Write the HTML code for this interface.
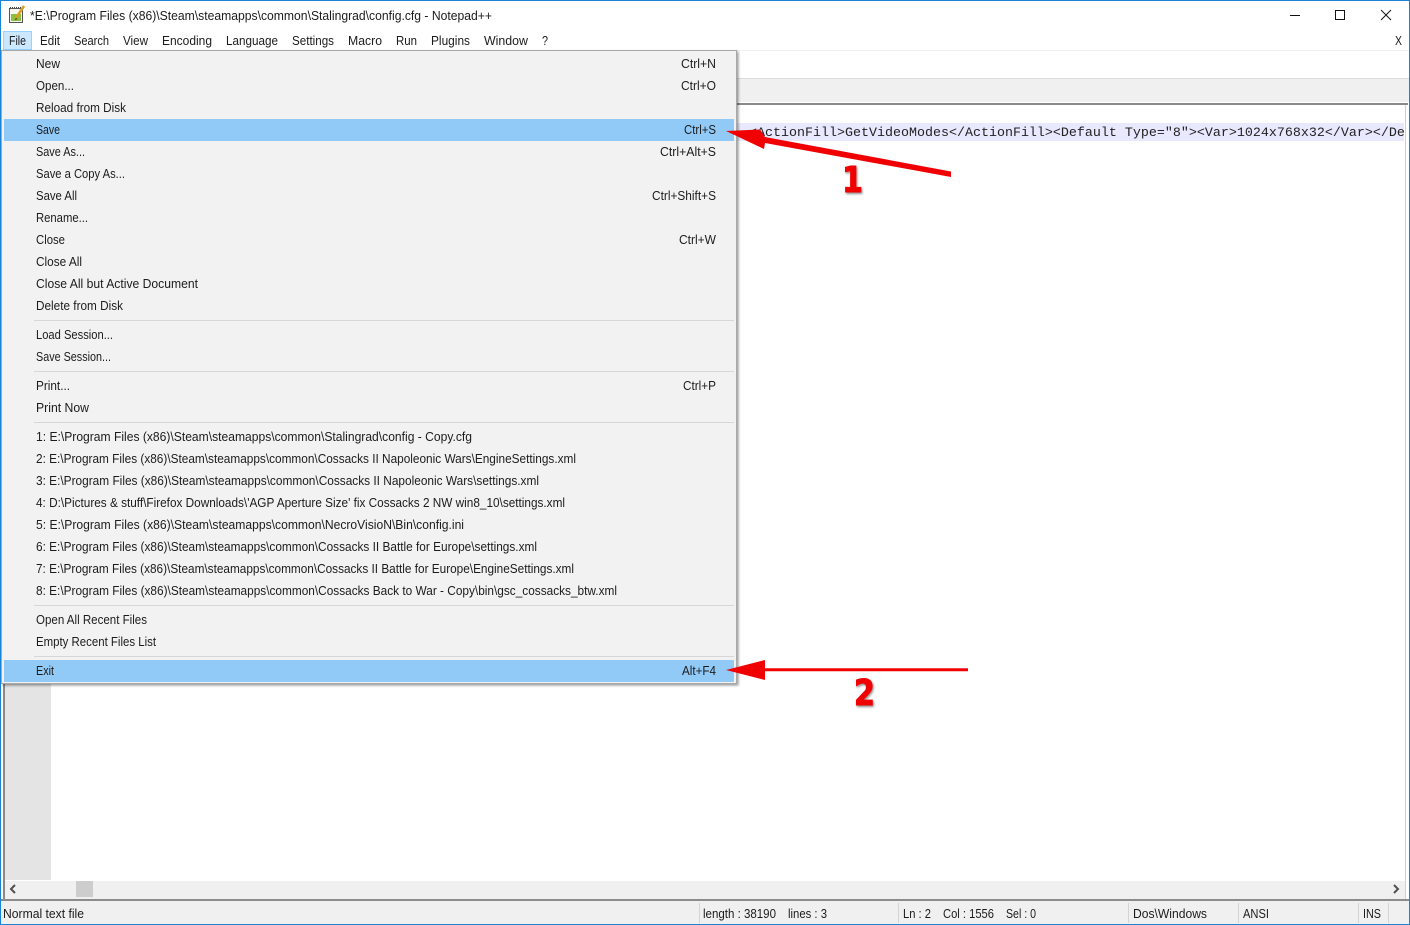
<!DOCTYPE html>
<html><head><meta charset="utf-8"><style>
html,body{margin:0;padding:0;background:#fff;width:1410px;height:925px;overflow:hidden}
svg{display:block}
text{font-family:"Liberation Sans",sans-serif;font-size:12.5px;fill:#1c1c1c}
.m{font-family:"Liberation Mono",monospace;font-size:13.33px;fill:#222}
</style></head><body>
<svg width="1410" height="925" viewBox="0 0 1410 925" xmlns="http://www.w3.org/2000/svg">
<defs>
<filter id="sh" x="-5%" y="-5%" width="110%" height="110%"><feDropShadow dx="1.5" dy="1.5" stdDeviation="1.2" flood-color="#000" flood-opacity=".4"/></filter>
<filter id="ns" x="-30%" y="-30%" width="160%" height="160%"><feDropShadow dx="1" dy="1.5" stdDeviation="1" flood-color="#000" flood-opacity=".45"/></filter>
<clipPath id="cl"><rect x="52" y="105" width="1352" height="775"/></clipPath>
</defs>
<rect width="1410" height="925" fill="#fff"/>
<!-- toolbars -->
<rect x="1" y="50" width="1408" height="1" fill="#f0f0f0"/>
<rect x="1" y="78" width="1408" height="1" fill="#dcdcdc"/>
<rect x="1" y="79" width="1408" height="23" fill="#f0f0f0"/>
<!-- editor -->
<rect x="3" y="103" width="1405" height="2" fill="#8a8a8a"/>
<rect x="3" y="103" width="2" height="797" fill="#8a8a8a"/>
<rect x="1405" y="105" width="1" height="795" fill="#d0d0d0"/>
<rect x="5" y="105" width="46" height="775" fill="#e4e4e4"/>
<rect x="52" y="123" width="1352" height="18" fill="#e8e8ff"/>
<text class="m" x="749" y="136" clip-path="url(#cl)">&lt;ActionFill&gt;GetVideoModes&lt;/ActionFill&gt;&lt;Default Type="8"&gt;&lt;Var&gt;1024x768x32&lt;/Var&gt;&lt;/De</text>
<!-- scrollbar -->
<rect x="5" y="881" width="1400" height="18" fill="#f0f0f0"/>
<rect x="76" y="881" width="17" height="16" fill="#cdcdcd"/>
<path d="M15 885l-4 4 4 4M1394 885l4 4-4 4" fill="none" stroke="#505050" stroke-width="2"/>
<!-- status -->
<rect x="1" y="899" width="1408" height="2" fill="#8c8c8c"/>
<rect x="1" y="901" width="1408" height="23" fill="#f0f0f0"/>
<path d="M699.500 903v20M898.500 903v20M1128.500 903v20M1238.500 903v20M1358.500 903v20M1388.500 903v20" stroke="#d4d4d4"/>
<text x="3" y="918" textLength="81" lengthAdjust="spacingAndGlyphs">Normal text file</text>
<text x="703" y="918" textLength="73" lengthAdjust="spacingAndGlyphs">length : 38190</text>
<text x="788" y="918" textLength="39" lengthAdjust="spacingAndGlyphs">lines : 3</text>
<text x="903" y="918" textLength="28" lengthAdjust="spacingAndGlyphs">Ln : 2</text>
<text x="943" y="918" textLength="51" lengthAdjust="spacingAndGlyphs">Col : 1556</text>
<text x="1006" y="918" textLength="30" lengthAdjust="spacingAndGlyphs">Sel : 0</text>
<text x="1133" y="918" textLength="74" lengthAdjust="spacingAndGlyphs">Dos\Windows</text>
<text x="1243" y="918" textLength="26" lengthAdjust="spacingAndGlyphs">ANSI</text>
<text x="1363" y="918" textLength="18" lengthAdjust="spacingAndGlyphs">INS</text>
<!-- title bar -->
<path d="M9.500 8.500h13v14h-13z" fill="#f6f6f0" stroke="#555"/>
<path d="M10 7.500h12" stroke="#444" stroke-dasharray="1 1"/>
<rect x="11" y="14" width="10" height="7" fill="#8fbf3f"/>
<path d="M16 18l8-12" stroke="#d8a020" stroke-width="2.500"/>
<path d="M14.500 20l1.500-2 1.500 1z" fill="#333"/>
<text x="30" y="20" textLength="462" lengthAdjust="spacingAndGlyphs">*E:\Program Files (x86)\Steam\steamapps\common\Stalingrad\config.cfg - Notepad++</text>
<path d="M1290 15.500h10" stroke="#111"/>
<rect x="1335.500" y="10.500" width="9" height="9" fill="none" stroke="#111"/>
<path d="M1381 10l10 10M1391 10l-10 10" stroke="#111"/>
<!-- menu bar -->
<rect x="3.500" y="31.500" width="28" height="18" fill="#cce8ff" stroke="#99d1ff"/>
<text x="9" y="45" textLength="17" lengthAdjust="spacingAndGlyphs">File</text>
<text x="40" y="45" textLength="20" lengthAdjust="spacingAndGlyphs">Edit</text>
<text x="74" y="45" textLength="35" lengthAdjust="spacingAndGlyphs">Search</text>
<text x="123" y="45" textLength="25" lengthAdjust="spacingAndGlyphs">View</text>
<text x="162" y="45" textLength="50" lengthAdjust="spacingAndGlyphs">Encoding</text>
<text x="226" y="45" textLength="52" lengthAdjust="spacingAndGlyphs">Language</text>
<text x="292" y="45" textLength="42" lengthAdjust="spacingAndGlyphs">Settings</text>
<text x="348" y="45" textLength="34" lengthAdjust="spacingAndGlyphs">Macro</text>
<text x="396" y="45" textLength="21" lengthAdjust="spacingAndGlyphs">Run</text>
<text x="431" y="45" textLength="39" lengthAdjust="spacingAndGlyphs">Plugins</text>
<text x="484" y="45" textLength="44" lengthAdjust="spacingAndGlyphs">Window</text>
<text x="542" y="45" textLength="6" lengthAdjust="spacingAndGlyphs">?</text>
<text x="1395" y="45" textLength="7" lengthAdjust="spacingAndGlyphs">X</text>
<!-- dropdown -->
<rect x="1.500" y="50.500" width="735" height="633" fill="#f2f2f2" stroke="#a8a8a8" filter="url(#sh)"/>
<rect x="4" y="119" width="730" height="22" fill="#91c9f7"/>
<rect x="4" y="660" width="730" height="22" fill="#91c9f7"/>
<path d="M34 320.500h700M34 371.500h700M34 422.500h700M34 605.500h700M34 656.500h700" stroke="#d7d7d7"/>
<text x="36" y="68" textLength="24" lengthAdjust="spacingAndGlyphs">New</text>
<text x="36" y="90" textLength="38" lengthAdjust="spacingAndGlyphs">Open...</text>
<text x="36" y="112" textLength="90" lengthAdjust="spacingAndGlyphs">Reload from Disk</text>
<text x="36" y="134" textLength="24" lengthAdjust="spacingAndGlyphs">Save</text>
<text x="36" y="156" textLength="49" lengthAdjust="spacingAndGlyphs">Save As...</text>
<text x="36" y="178" textLength="89" lengthAdjust="spacingAndGlyphs">Save a Copy As...</text>
<text x="36" y="200" textLength="41" lengthAdjust="spacingAndGlyphs">Save All</text>
<text x="36" y="222" textLength="52" lengthAdjust="spacingAndGlyphs">Rename...</text>
<text x="36" y="244" textLength="29" lengthAdjust="spacingAndGlyphs">Close</text>
<text x="36" y="266" textLength="46" lengthAdjust="spacingAndGlyphs">Close All</text>
<text x="36" y="288" textLength="162" lengthAdjust="spacingAndGlyphs">Close All but Active Document</text>
<text x="36" y="310" textLength="87" lengthAdjust="spacingAndGlyphs">Delete from Disk</text>
<text x="36" y="339" textLength="77" lengthAdjust="spacingAndGlyphs">Load Session...</text>
<text x="36" y="361" textLength="75" lengthAdjust="spacingAndGlyphs">Save Session...</text>
<text x="36" y="390" textLength="34" lengthAdjust="spacingAndGlyphs">Print...</text>
<text x="36" y="412" textLength="53" lengthAdjust="spacingAndGlyphs">Print Now</text>
<text x="36" y="441" textLength="436" lengthAdjust="spacingAndGlyphs">1: E:\Program Files (x86)\Steam\steamapps\common\Stalingrad\config - Copy.cfg</text>
<text x="36" y="463" textLength="540" lengthAdjust="spacingAndGlyphs">2: E:\Program Files (x86)\Steam\steamapps\common\Cossacks II Napoleonic Wars\EngineSettings.xml</text>
<text x="36" y="485" textLength="503" lengthAdjust="spacingAndGlyphs">3: E:\Program Files (x86)\Steam\steamapps\common\Cossacks II Napoleonic Wars\settings.xml</text>
<text x="36" y="507" textLength="529" lengthAdjust="spacingAndGlyphs">4: D:\Pictures &amp; stuff\Firefox Downloads\'AGP Aperture Size' fix Cossacks 2 NW win8_10\settings.xml</text>
<text x="36" y="529" textLength="428" lengthAdjust="spacingAndGlyphs">5: E:\Program Files (x86)\Steam\steamapps\common\NecroVisioN\Bin\config.ini</text>
<text x="36" y="551" textLength="501" lengthAdjust="spacingAndGlyphs">6: E:\Program Files (x86)\Steam\steamapps\common\Cossacks II Battle for Europe\settings.xml</text>
<text x="36" y="573" textLength="538" lengthAdjust="spacingAndGlyphs">7: E:\Program Files (x86)\Steam\steamapps\common\Cossacks II Battle for Europe\EngineSettings.xml</text>
<text x="36" y="595" textLength="581" lengthAdjust="spacingAndGlyphs">8: E:\Program Files (x86)\Steam\steamapps\common\Cossacks Back to War - Copy\bin\gsc_cossacks_btw.xml</text>
<text x="36" y="624" textLength="111" lengthAdjust="spacingAndGlyphs">Open All Recent Files</text>
<text x="36" y="646" textLength="120" lengthAdjust="spacingAndGlyphs">Empty Recent Files List</text>
<text x="36" y="675" textLength="18" lengthAdjust="spacingAndGlyphs">Exit</text>
<text x="681" y="68" textLength="35" lengthAdjust="spacingAndGlyphs">Ctrl+N</text>
<text x="681" y="90" textLength="35" lengthAdjust="spacingAndGlyphs">Ctrl+O</text>
<text x="684" y="134" textLength="32" lengthAdjust="spacingAndGlyphs">Ctrl+S</text>
<text x="660" y="156" textLength="56" lengthAdjust="spacingAndGlyphs">Ctrl+Alt+S</text>
<text x="652" y="200" textLength="64" lengthAdjust="spacingAndGlyphs">Ctrl+Shift+S</text>
<text x="679" y="244" textLength="37" lengthAdjust="spacingAndGlyphs">Ctrl+W</text>
<text x="683" y="390" textLength="33" lengthAdjust="spacingAndGlyphs">Ctrl+P</text>
<text x="682" y="675" textLength="34" lengthAdjust="spacingAndGlyphs">Alt+F4</text>
<!-- arrows -->
<path d="M726 131L760 129.500 765 137 951 171.500 951 177 765 143 764 149Z" fill="#f00000"/>
<path d="M726 670L765 660V668.300H968V671.300H765V680Z" fill="#f00000"/>
<text x="842" y="192" textLength="21" lengthAdjust="spacingAndGlyphs" filter="url(#ns)" stroke="#f00000" stroke-width="1" style="font-family:'DejaVu Sans',sans-serif;font-weight:bold;font-size:36px;fill:#f00000">1</text>
<text x="854" y="705" textLength="21" lengthAdjust="spacingAndGlyphs" filter="url(#ns)" stroke="#f00000" stroke-width="1" style="font-family:'DejaVu Sans',sans-serif;font-weight:bold;font-size:36px;fill:#f00000">2</text>
<!-- window border -->
<rect x=".5" y=".5" width="1409" height="924" fill="none" stroke="#1883d7"/>
</svg>
</body></html>
